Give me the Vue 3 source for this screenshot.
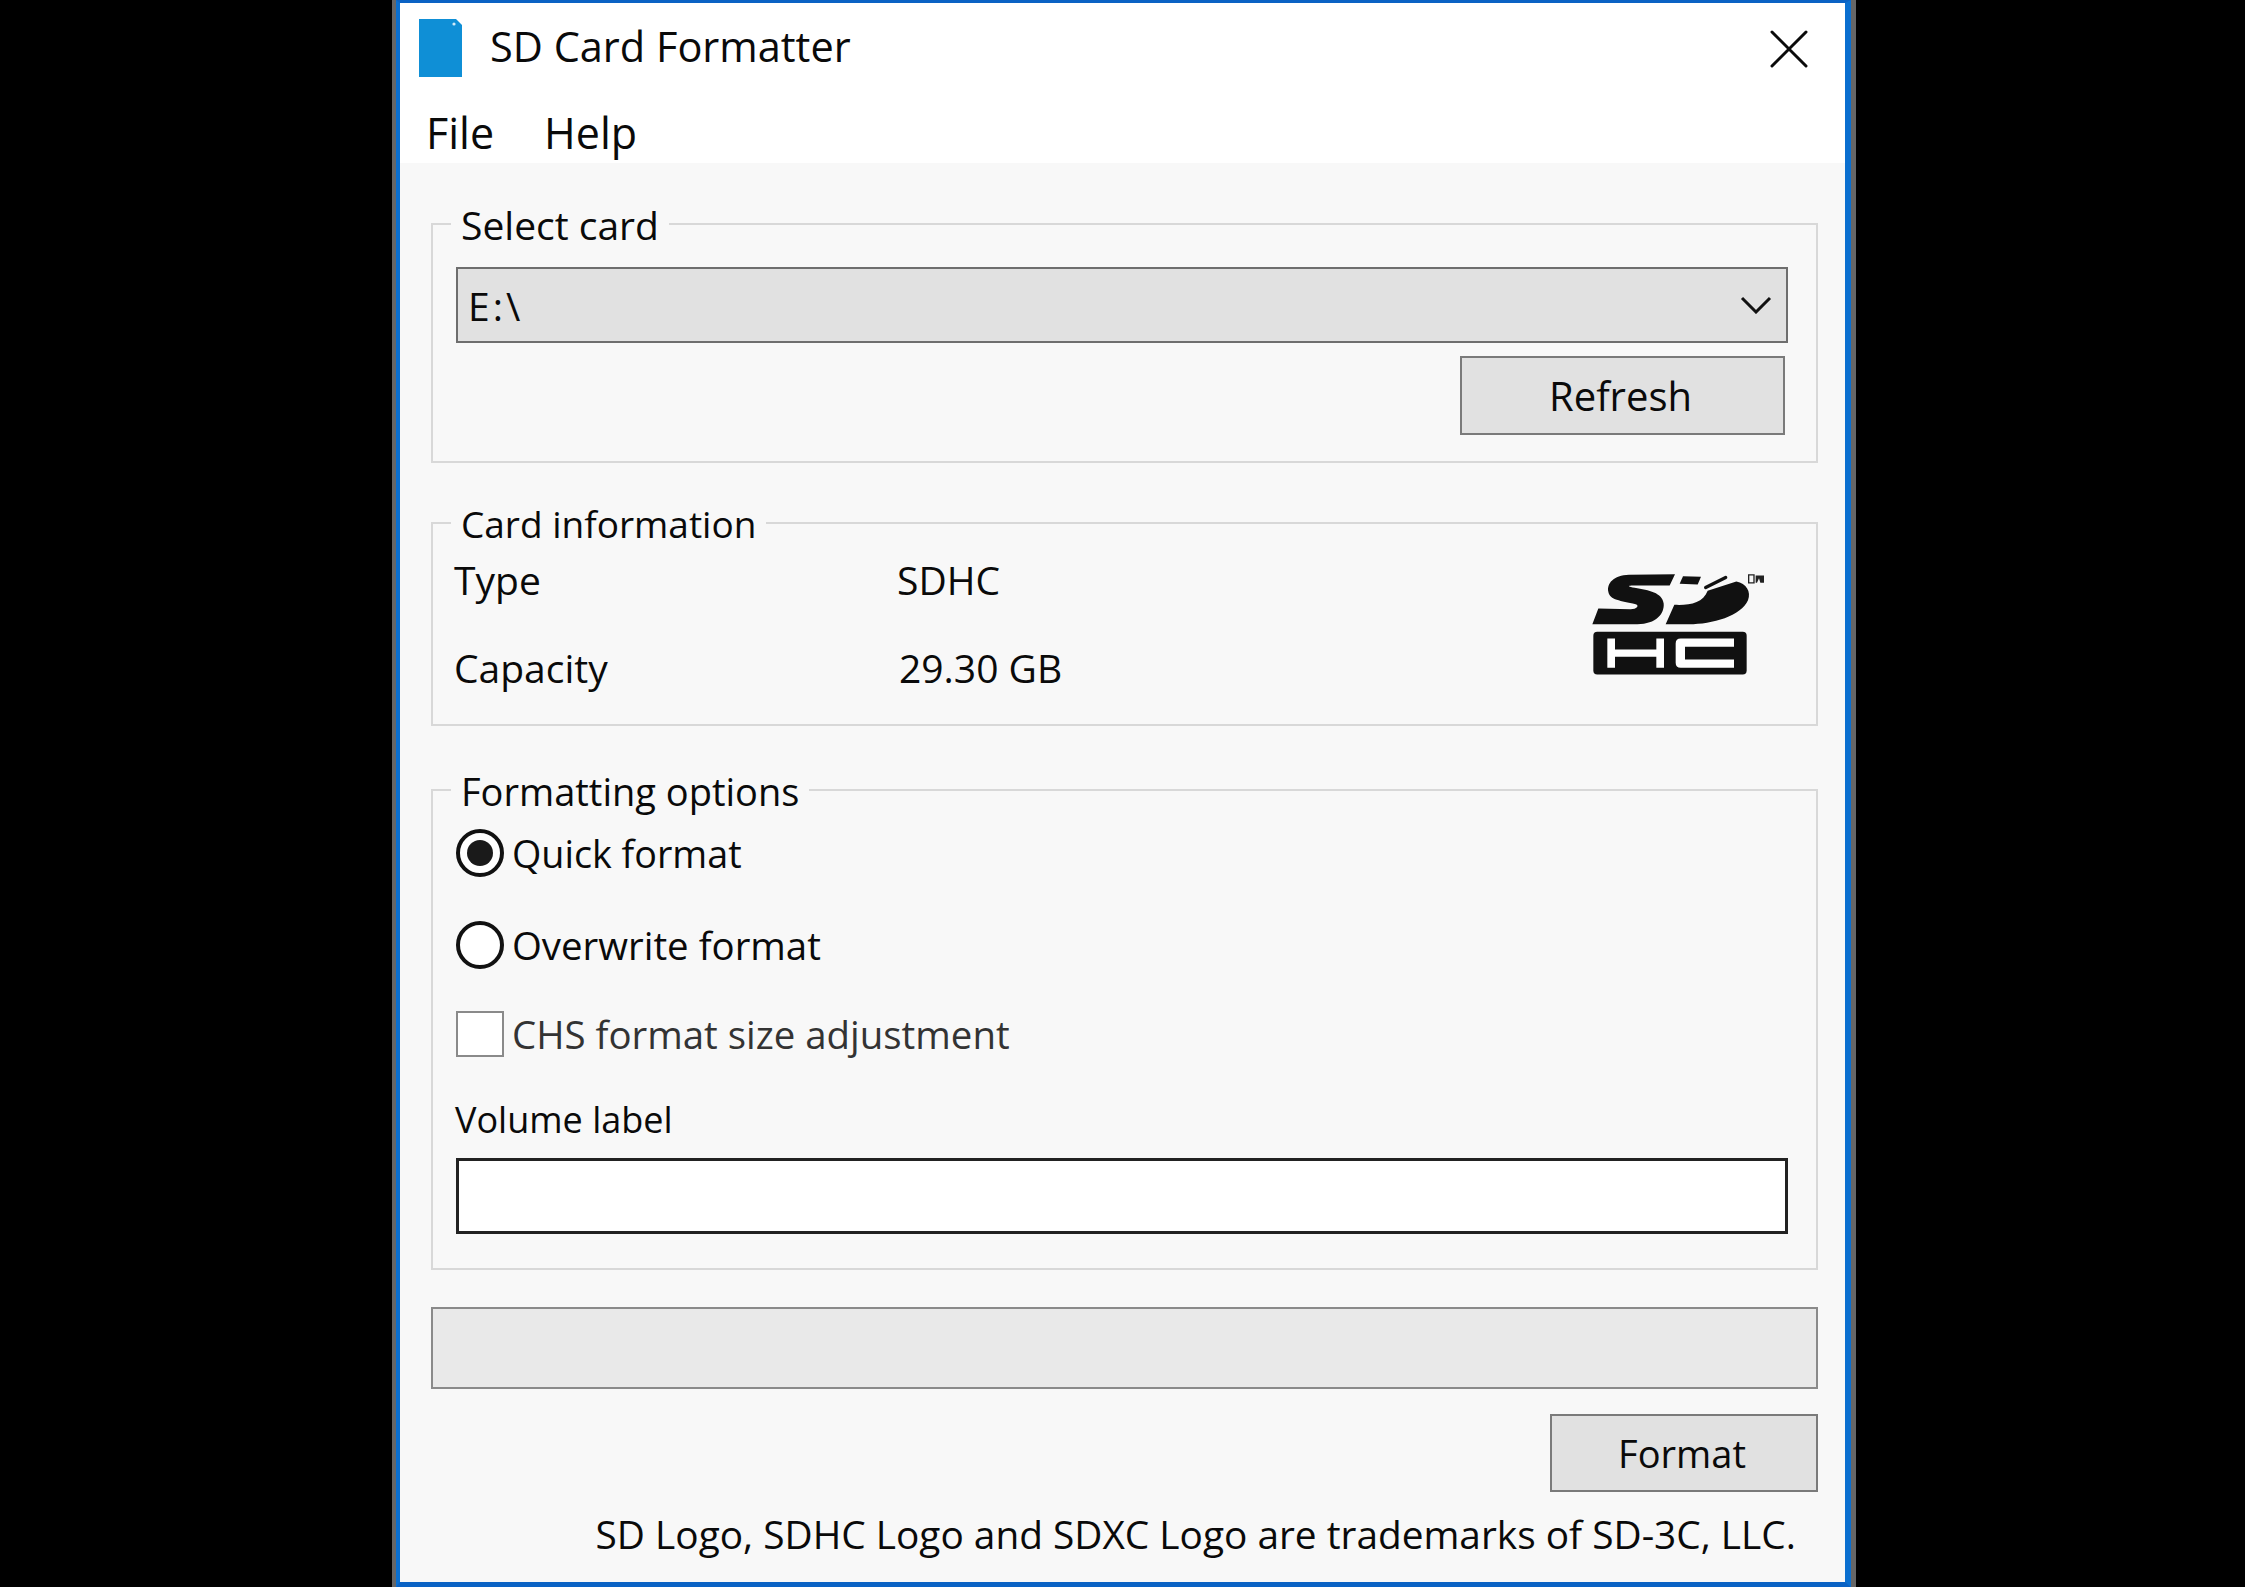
<template>
  <div class="page">
    <div class="window">
      <header class="titlebar">
        <svg class="app-icon" width="45" height="60" viewBox="0 0 45 60">
          <path d="M1 1 H38 L44 7 V59 H1 Z" fill="#0f8fd6" />
          <circle cx="36" cy="6" r="1.6" fill="#cfe9f7" />
        </svg>
        <span class="title">SD Card Formatter</span>
        <svg class="close" width="38" height="38" viewBox="0 0 38 38">
          <path d="M2 2 L36 36 M36 2 L2 36" stroke="#0b0b0b" stroke-width="3" stroke-linecap="round" />
        </svg>
      </header>

      <nav class="menu">
        <span>File</span>
        <span>Help</span>
      </nav>

      <main class="content">
        <section class="group select-group">
          <span class="legend">Select card</span>
          <div class="combo">
            <span class="drive">E:\</span>
            <svg width="32" height="18" viewBox="0 0 32 18">
              <path d="M2 2 L16 16 L30 2" fill="none" stroke="#111" stroke-width="3" />
            </svg>
          </div>
          <div class="refresh-row">
            <button class="btn refresh">Refresh</button>
          </div>
        </section>

        <section class="group info-group">
          <span class="legend">Card information</span>
          <div class="info-grid">
            <span>Type</span>
            <span>{{ card.type }}</span>
            <span>Capacity</span>
            <span class="capacity">{{ card.capacity }}</span>
          </div>
          <svg class="sd-logo" width="180" height="107" viewBox="120 90 540 320">
            <path d="M378 102 L240 104 C193 106 173 130 178 155 C182 180 215 182 260 192 C272 196 263 207 245 207 L148 205 L130 252 L265 252 C322 252 347 220 344 190 C340 158 300 150 257 143 C238 140 236 137 247 136 L362 136 Z" fill="#111" />
            <path d="M402 108 L456 110 L446 133 L392 131 Z" fill="#111" />
            <path d="M470 142 L530 112" stroke="#111" stroke-width="10" stroke-linecap="round" />
            <path d="M350 252 L376 194 C420 196 462 190 476 152 L562 124 C592 130 607 155 597 180 C577 227 490 252 420 252 Z" fill="#111" />
            <path d="M599 104 H615 V128 H599 Z" fill="none" stroke="#222" stroke-width="4" />
            <path d="M620 106 L645 106 L645 128 L634 128 L630 114 L624 128 L620 128 Z" fill="#222" />
            <rect x="133" y="275" width="460" height="128" rx="12" fill="#111" />
            <path d="M175 295 H198 V328 H322 V295 H345 V383 H322 V350 H198 V383 H175 Z" fill="#fff" />
            <path d="M555 295 H395 Q380 295 380 310 V368 Q380 383 395 383 H555 V358 H408 V320 H555 Z" fill="#fff" />
          </svg>
        </section>

        <section class="group options-group">
          <span class="legend">Formatting options</span>
          <label class="option first">
            <span class="radio checked"></span>
            <span>Quick format</span>
          </label>
          <label class="option second">
            <span class="radio"></span>
            <span>Overwrite format</span>
          </label>
          <label class="option third disabled">
            <span class="checkbox"></span>
            <span>CHS format size adjustment</span>
          </label>
          <div class="volume-label">Volume label</div>
          <div class="volume-input"></div>
        </section>

        <div class="progress"></div>

        <div class="actions">
          <button class="btn format">Format</button>
        </div>

        <p class="trademark">SD Logo, SDHC Logo and SDXC Logo are trademarks of SD-3C, LLC.</p>
      </main>
    </div>
  </div>
</template>

<script setup>
const card = {
  type: 'SDHC',
  capacity: '29.30 GB'
}
</script>

<style>
html, body {
  margin: 0;
  background: #000;
}
</style>

<style scoped>
.page {
  height: 1587px;
  padding-left: 396px;
  background: #000;
  overflow: hidden;
  font-family: "Open Sans", "Noto Sans", sans-serif;
  font-weight: 500;
  color: #0a0a0a;
}

.window {
  box-sizing: border-box;
  width: 1455px;
  height: 1587px;
  display: flex;
  flex-direction: column;
  background: #fff;
  border-top: 3px solid #0a62c4;
  border-bottom: 5px solid #0a62c4;
  border-left: 4px solid #0a6fd0;
  border-right: 6px solid #0a6fd0;
  box-shadow: -4px 0 0 #666, 5px 0 0 #666;
}

.titlebar {
  height: 92px;
  flex-shrink: 0;
  display: flex;
  align-items: center;
  padding: 0 37px 0 18px;
  box-sizing: border-box;
}

.app-icon {
  flex-shrink: 0;
  margin-bottom: 2px;
}

.title {
  margin: 0 0 6px 27px;
  flex: 1;
  font-size: 41.5px;
}

.menu {
  height: 68px;
  flex-shrink: 0;
  display: flex;
  align-items: center;
  gap: 50px;
  padding: 6px 0 0 26px;
  box-sizing: border-box;
  font-size: 43px;
}

.content {
  flex: 1;
  background: #f8f8f8;
  padding: 60px 27px 0 31px;
  display: flex;
  flex-direction: column;
}

.group {
  position: relative;
  box-sizing: border-box;
  border: 2px solid #d8d8d8;
  padding-left: 23px;
  padding-right: 28px;
}

.legend {
  position: absolute;
  left: 18px;
  top: -23px;
  padding: 0 10px;
  background: #f8f8f8;
  font-size: 38px;
  line-height: 46px;
}

.select-group .legend {
  font-size: 39px;
}

.info-group .legend {
  font-size: 37px;
}

.select-group {
  height: 240px;
  padding-top: 42px;
}

.combo {
  box-sizing: border-box;
  height: 76px;
  display: flex;
  align-items: center;
  justify-content: space-between;
  padding: 0 14px 0 10px;
  background: #e1e1e1;
  border: 2px solid #6e6e6e;
  font-size: 39px;
}

.drive {
  letter-spacing: 3px;
}

.refresh-row {
  display: flex;
  justify-content: flex-end;
  padding: 13px 3px 0 0;
}

.btn {
  box-sizing: border-box;
  background: #e1e1e1;
  border: 2px solid #7a7a7a;
  font: inherit;
  color: #0a0a0a;
  padding: 0 4px 0 0;
}

.refresh {
  width: 325px;
  height: 79px;
  font-size: 40px;
}

.info-group {
  height: 204px;
  margin-top: 59px;
  margin-bottom: 63px;
  display: flex;
  justify-content: space-between;
}

.info-grid {
  display: grid;
  grid-template-columns: 443px 1fr;
  grid-auto-rows: 88px;
  align-items: center;
  font-size: 39px;
  padding-top: 11px;
  margin-left: -2px;
}

.capacity {
  margin-left: 2px;
}

.sd-logo {
  margin: 46px 19px 0 0;
}

.options-group {
  height: 481px;
  padding-top: 37px;
}

.option {
  height: 48px;
  display: flex;
  align-items: center;
  gap: 8px;
  font-size: 38.4px;
}

.first {
  font-size: 37.7px;
  padding-top: 1px;
}

.second {
  margin-top: 44px;
}

.third {
  margin-top: 41px;
}

.disabled {
  color: #333;
}

.radio {
  position: relative;
  box-sizing: border-box;
  width: 48px;
  height: 48px;
  border: 4px solid #111;
  border-radius: 50%;
  background: #fff;
}

.radio.checked::after {
  content: "";
  position: absolute;
  inset: 7px;
  border-radius: 50%;
  background: #1a1a1a;
}

.checkbox {
  box-sizing: border-box;
  width: 48px;
  height: 46px;
  border: 2px solid #8a8a8a;
  background: #fff;
}

.volume-label {
  margin-top: 39px;
  font-size: 36px;
  line-height: 46px;
  margin-left: -1px;
}

.volume-input {
  box-sizing: border-box;
  height: 76px;
  margin-top: 15px;
  background: #fff;
  border: 3px solid #222;
}

.progress {
  box-sizing: border-box;
  height: 82px;
  margin-top: 37px;
  background: #e9e9e9;
  border: 2px solid #8a8a8a;
}

.actions {
  display: flex;
  justify-content: flex-end;
  margin-top: 25px;
}

.format {
  width: 268px;
  height: 78px;
  font-size: 38px;
}

.trademark {
  margin: 19px 22px 0 0;
  text-align: right;
  white-space: nowrap;
  font-size: 38.8px;
  line-height: 46px;
}
</style>
